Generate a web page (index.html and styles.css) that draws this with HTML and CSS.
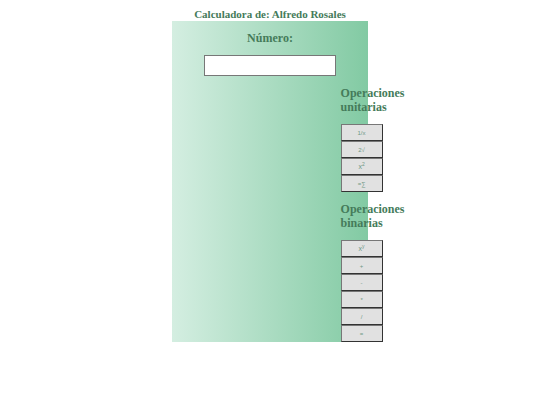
FILE: index.html
```html
<!DOCTYPE html>
<html lang="es">
<head>
  <meta charset="UTF-8" />
  <meta name="viewport" content="width=device-width, initial-scale=1.0"/>
  <title>Calculadora</title>
  <link rel="stylesheet" href="styles.css">
</head>
<body>

<h1>Calculadora de: Alfredo Rosales</h1>

<main class="calculadora">
  <label for="numero">Número:</label>
  <input type="text" id="numero">

  <div class="operaciones">
    <h2>Operaciones unitarias</h2>
    <div class="botones">
      <button type="button">1/x</button>
      <button type="button">2√</button>
      <button type="button" class="potencia">x<sup>2</sup></button>
      <button type="button">=∑</button>
    </div>

    <h2>Operaciones binarias</h2>
    <div class="botones">
      <button type="button" class="potencia">x<sup>y</sup></button>
      <button type="button">+</button>
      <button type="button">-</button>
      <button type="button">*</button>
      <button type="button">/</button>
      <button type="button">=</button>
    </div>
  </div>
</main>

</body>
</html>
```

FILE: styles.css
```css
body {
  margin: 8px;
  background: white;
  color: #457b5a;
  font-family: "Liberation Serif", "Times New Roman", serif;
}
h1 {
  margin: 0;
  font-size: 11px;
  line-height: 13px;
  text-align: center;
}
.calculadora {
  display: flex;
  flex-direction: column;
  align-items: center;
  gap: 10px;
  max-width: 196px;
  margin: 0 auto;
  padding-top: 10px;
  background: linear-gradient(to right, #d4eee1, #82caa3);
}
label {
  font-size: 12px;
  font-weight: bold;
  line-height: 14px;
}
input {
  box-sizing: border-box;
  width: 67%;
  height: 21px;
  padding: 1px 4px;
  border: 1px solid #777;
  background: white;
}
/* the column of operations hangs over the right edge */
.operaciones {
  align-self: flex-start;
  width: 42px;
  margin-left: 86%;
}
h2 {
  margin: 0;
  padding-bottom: 10px;
  font-size: 12px;
  line-height: 14px;
}
.botones + h2 {
  padding-top: 10px;
}
.botones {
  display: flex;
  flex-direction: column;
}
button {
  height: 17px;
  padding: 0;
  border: 1px solid;
  border-color: #777 #333 #333 #777;
  border-radius: 0;
  background: #e1e1e1;
  color: #6f9784;
  font-family: "Liberation Sans", Arial, sans-serif;
  font-size: 6px;
}
.potencia {
  font-size: 7px;
}
sup {
  font-size: 5px;
  line-height: 0;
}
```
